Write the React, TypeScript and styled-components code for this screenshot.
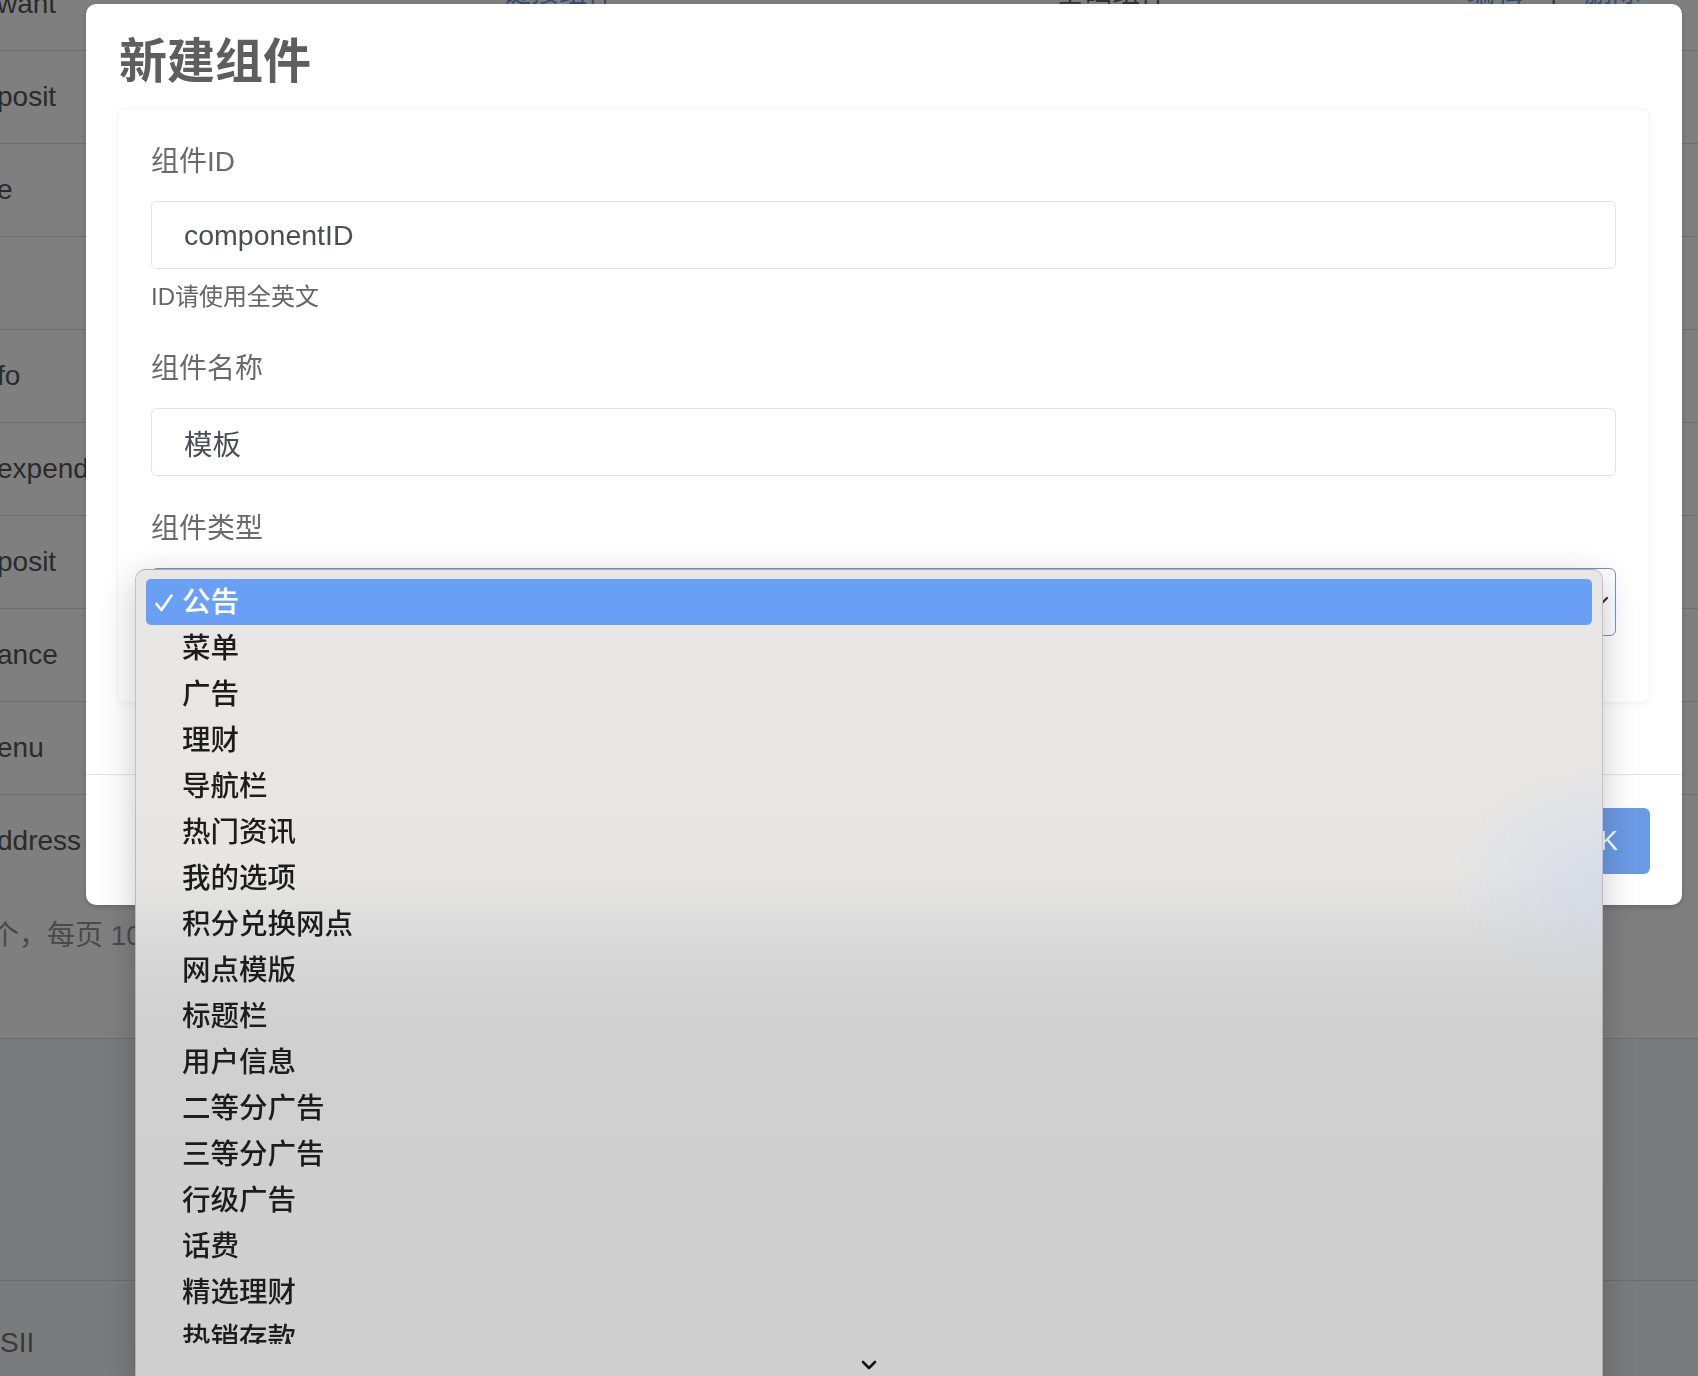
import styled, { createGlobalStyle } from "styled-components";

const GlobalStyle = createGlobalStyle`
  html, body {
    margin: 0;
    padding: 0;
    width: 100%;
    height: 100%;
    overflow: hidden;
  }
  body {
    font-family: "Liberation Sans", "Noto Sans CJK SC", sans-serif;
    background: #ffffff;
  }
  * {
    box-sizing: border-box;
  }
`;

/* ---------- page behind the modal ---------- */

const PageBehind = styled.div`
  margin-top: -42px;
  font-size: 28px;
  color: #565656;
`;

const TableRow = styled.div<{ $last?: boolean }>`
  display: grid;
  grid-template-columns: 503px 553px 411px 1fr;
  height: 93px;
  border-bottom: 1px solid ${(p) => (p.$last ? "transparent" : "#dcdcdc")};
  align-items: center;
`;

const IdCell = styled.div`
  white-space: nowrap;
  overflow: hidden;
  line-height: 42px;
  margin-left: -3px;
`;

const TopCell = styled.div<{ $tone?: "link" | "text" }>`
  align-self: start;
  padding-top: 14px;
  line-height: 42px;
  white-space: nowrap;
  color: ${(p) => (p.$tone === "link" ? "#6f9be8" : "#666666")};
`;

const ActionCell = styled(TopCell)`
  display: flex;
  gap: 27px;
`;

const Sep = styled.span`
  color: #777;
`;

const PagerBar = styled.div`
  height: 151px;
  padding-top: 27px;
  border-bottom: 1px solid #dcdcdc;
  line-height: 42px;
  color: #949494;
  white-space: nowrap;
  span {
    margin-left: -9px;
  }
`;

const FooterBand = styled.div`
  height: 242px;
  background: #f5f6f9;
  border-bottom: 1px solid #dcdcdc;
`;

const BottomRow = styled.div`
  padding-top: 41px;
  height: 200px;
  line-height: 42px;
  background: #f5f6f9;
  color: #747474;
`;

/* ---------- modal ---------- */

const Backdrop = styled.div`
  position: fixed;
  inset: 0;
  background: rgba(0, 0, 0, 0.5);
`;

const ModalDialog = styled.div`
  margin: 4px 16px 0 86px;
  background: #ffffff;
  border-radius: 10px;
  box-shadow: 0 2px 6px rgba(0, 0, 0, 0.2);
`;

const ModalHeader = styled.div`
  padding: 29px 33px 17px;
`;

const ModalTitle = styled.h3`
  margin: 0;
  font-size: 48px;
  line-height: 58px;
  font-weight: 700;
  color: #5e5e5e;
`;

const ModalBody = styled.div`
  padding: 0 32px 71px 31px;
`;

const FormCard = styled.div`
  padding: 33px;
  border: 1px solid #f3f4f5;
  border-radius: 8px;
  box-shadow: 0 2px 4px rgba(0, 0, 0, 0.03);
`;

const FieldGroup = styled.div`
  margin-bottom: 33px;
`;

const FieldLabel = styled.label`
  display: block;
  font-size: 28px;
  line-height: 40px;
  margin-bottom: 19px;
  color: #6a6a6a;
`;

const TextInput = styled.div`
  height: 68px;
  display: flex;
  align-items: center;
  padding: 0 32px;
  border: 1px solid #dde3e8;
  border-radius: 6px;
  font-size: 28.5px;
  color: #4a4f55;
`;

const HelpText = styled.div`
  margin-top: 9px;
  font-size: 24px;
  line-height: 38px;
  color: #666666;
`;

const SelectBox = styled(TextInput)`
  position: relative;
  justify-content: space-between;
  padding-right: 6px;
  border-color: #6f95cf;
`;

const ModalFooter = styled.div`
  display: flex;
  justify-content: flex-end;
  padding: 33px 32px 31px;
  border-top: 1px solid #e3e5e8;
`;

const PrimaryButton = styled.button`
  height: 66px;
  padding: 0 32px;
  border: none;
  border-radius: 6px;
  background: #6b9be5;
  color: #ffffff;
  font-family: "Liberation Sans", "Noto Sans CJK SC", sans-serif;
  font-size: 27px;
  font-weight: 300;
`;

/* ---------- native select popup ---------- */

const SelectPopup = styled.div`
  position: absolute;
  top: 0;
  left: -17px;
  width: 1468px;
  height: 820px;
  border: 1px solid rgba(0, 0, 0, 0.16);
  border-radius: 10px 10px 0 0;
  background:
    radial-gradient(ellipse 150px 110px at 1470px 310px, rgba(198, 210, 234, 0.5), rgba(198, 210, 234, 0) 100%),
    linear-gradient(180deg, #e8e7e6 0px, #e7e6e5 300px, #d8d8d8 380px, #d0d0d0 460px, #cfcfcf 100%);
  box-shadow: 0 10px 36px rgba(0, 0, 0, 0.22);
  color: #1c1c1c;
`;

const OptionList = styled.div`
  height: 774px;
  padding: 9px 10px 0;
  overflow: hidden;
`;

const OptionItem = styled.div<{ $selected?: boolean }>`
  position: relative;
  height: 46px;
  line-height: 46px;
  padding-left: 36px;
  font-size: 28.5px;
  font-weight: 500;
  border-radius: 5px;
  background: ${(p) => (p.$selected ? "#69a0f6" : "transparent")};
  color: ${(p) => (p.$selected ? "#ffffff" : "#1c1c1c")};
`;

const CheckMark = styled.svg`
  position: absolute;
  left: 8px;
  top: 14px;
`;

const ScrollHint = styled.div`
  height: 42px;
  display: flex;
  align-items: center;
  justify-content: center;
`;

const tableRows = [
  "want",
  "posit",
  "e",
  "",
  "fo",
  "expend",
  "posit",
  "ance",
  "enu",
  "ddress",
];

const options = [
  "公告",
  "菜单",
  "广告",
  "理财",
  "导航栏",
  "热门资讯",
  "我的选项",
  "积分兑换网点",
  "网点模版",
  "标题栏",
  "用户信息",
  "二等分广告",
  "三等分广告",
  "行级广告",
  "话费",
  "精选理财",
  "热销存款",
];

export default function App() {
  return (
    <>
      <GlobalStyle />
      <PageBehind>
        {tableRows.map((id, i) =>
          i === 0 ? (
            <TableRow key={i}>
              <IdCell>{id}</IdCell>
              <TopCell $tone="link">链接组件</TopCell>
              <TopCell>基础组件</TopCell>
              <ActionCell $tone="link">
                <span>编辑</span>
                <Sep>|</Sep>
                <span>删除</span>
              </ActionCell>
            </TableRow>
          ) : (
            <TableRow key={i} $last={i === tableRows.length - 1}>
              <IdCell>{id}</IdCell>
            </TableRow>
          )
        )}
        <PagerBar>
          <span>个，每页 10 条</span>
        </PagerBar>
        <FooterBand />
        <BottomRow>SII</BottomRow>
      </PageBehind>

      <Backdrop>
        <ModalDialog>
          <ModalHeader>
            <ModalTitle>新建组件</ModalTitle>
          </ModalHeader>
          <ModalBody>
            <FormCard>
              <FieldGroup>
                <FieldLabel>组件ID</FieldLabel>
                <TextInput>componentID</TextInput>
                <HelpText>ID请使用全英文</HelpText>
              </FieldGroup>
              <FieldGroup>
                <FieldLabel>组件名称</FieldLabel>
                <TextInput>模板</TextInput>
              </FieldGroup>
              <FieldGroup>
                <FieldLabel>组件类型</FieldLabel>
                <SelectBox>
                  <span>公告</span>
                  <svg width="20" height="12" viewBox="0 0 20 12">
                    <path d="M2 2 L10 10 L18 2" fill="none" stroke="#343a40" strokeWidth="2.4" strokeLinecap="round" strokeLinejoin="round" />
                  </svg>
                  <SelectPopup>
                    <OptionList>
                      {options.map((name, i) => (
                        <OptionItem key={name} $selected={i === 0}>
                          {i === 0 && (
                            <CheckMark width="20" height="20" viewBox="0 0 20 20">
                              <path d="M2.5 11 L7.5 17 L17.5 2.5" fill="none" stroke="#ffffff" strokeWidth="2.6" strokeLinecap="round" strokeLinejoin="round" />
                            </CheckMark>
                          )}
                          {name}
                        </OptionItem>
                      ))}
                    </OptionList>
                    <ScrollHint>
                      <svg width="16" height="10" viewBox="0 0 16 10">
                        <path d="M2 2 L8 8 L14 2" fill="none" stroke="#111111" strokeWidth="2.6" strokeLinecap="round" strokeLinejoin="round" />
                      </svg>
                    </ScrollHint>
                  </SelectPopup>
                </SelectBox>
              </FieldGroup>
            </FormCard>
          </ModalBody>
          <ModalFooter>
            <PrimaryButton>OK</PrimaryButton>
          </ModalFooter>
        </ModalDialog>
      </Backdrop>
    </>
  );
}
